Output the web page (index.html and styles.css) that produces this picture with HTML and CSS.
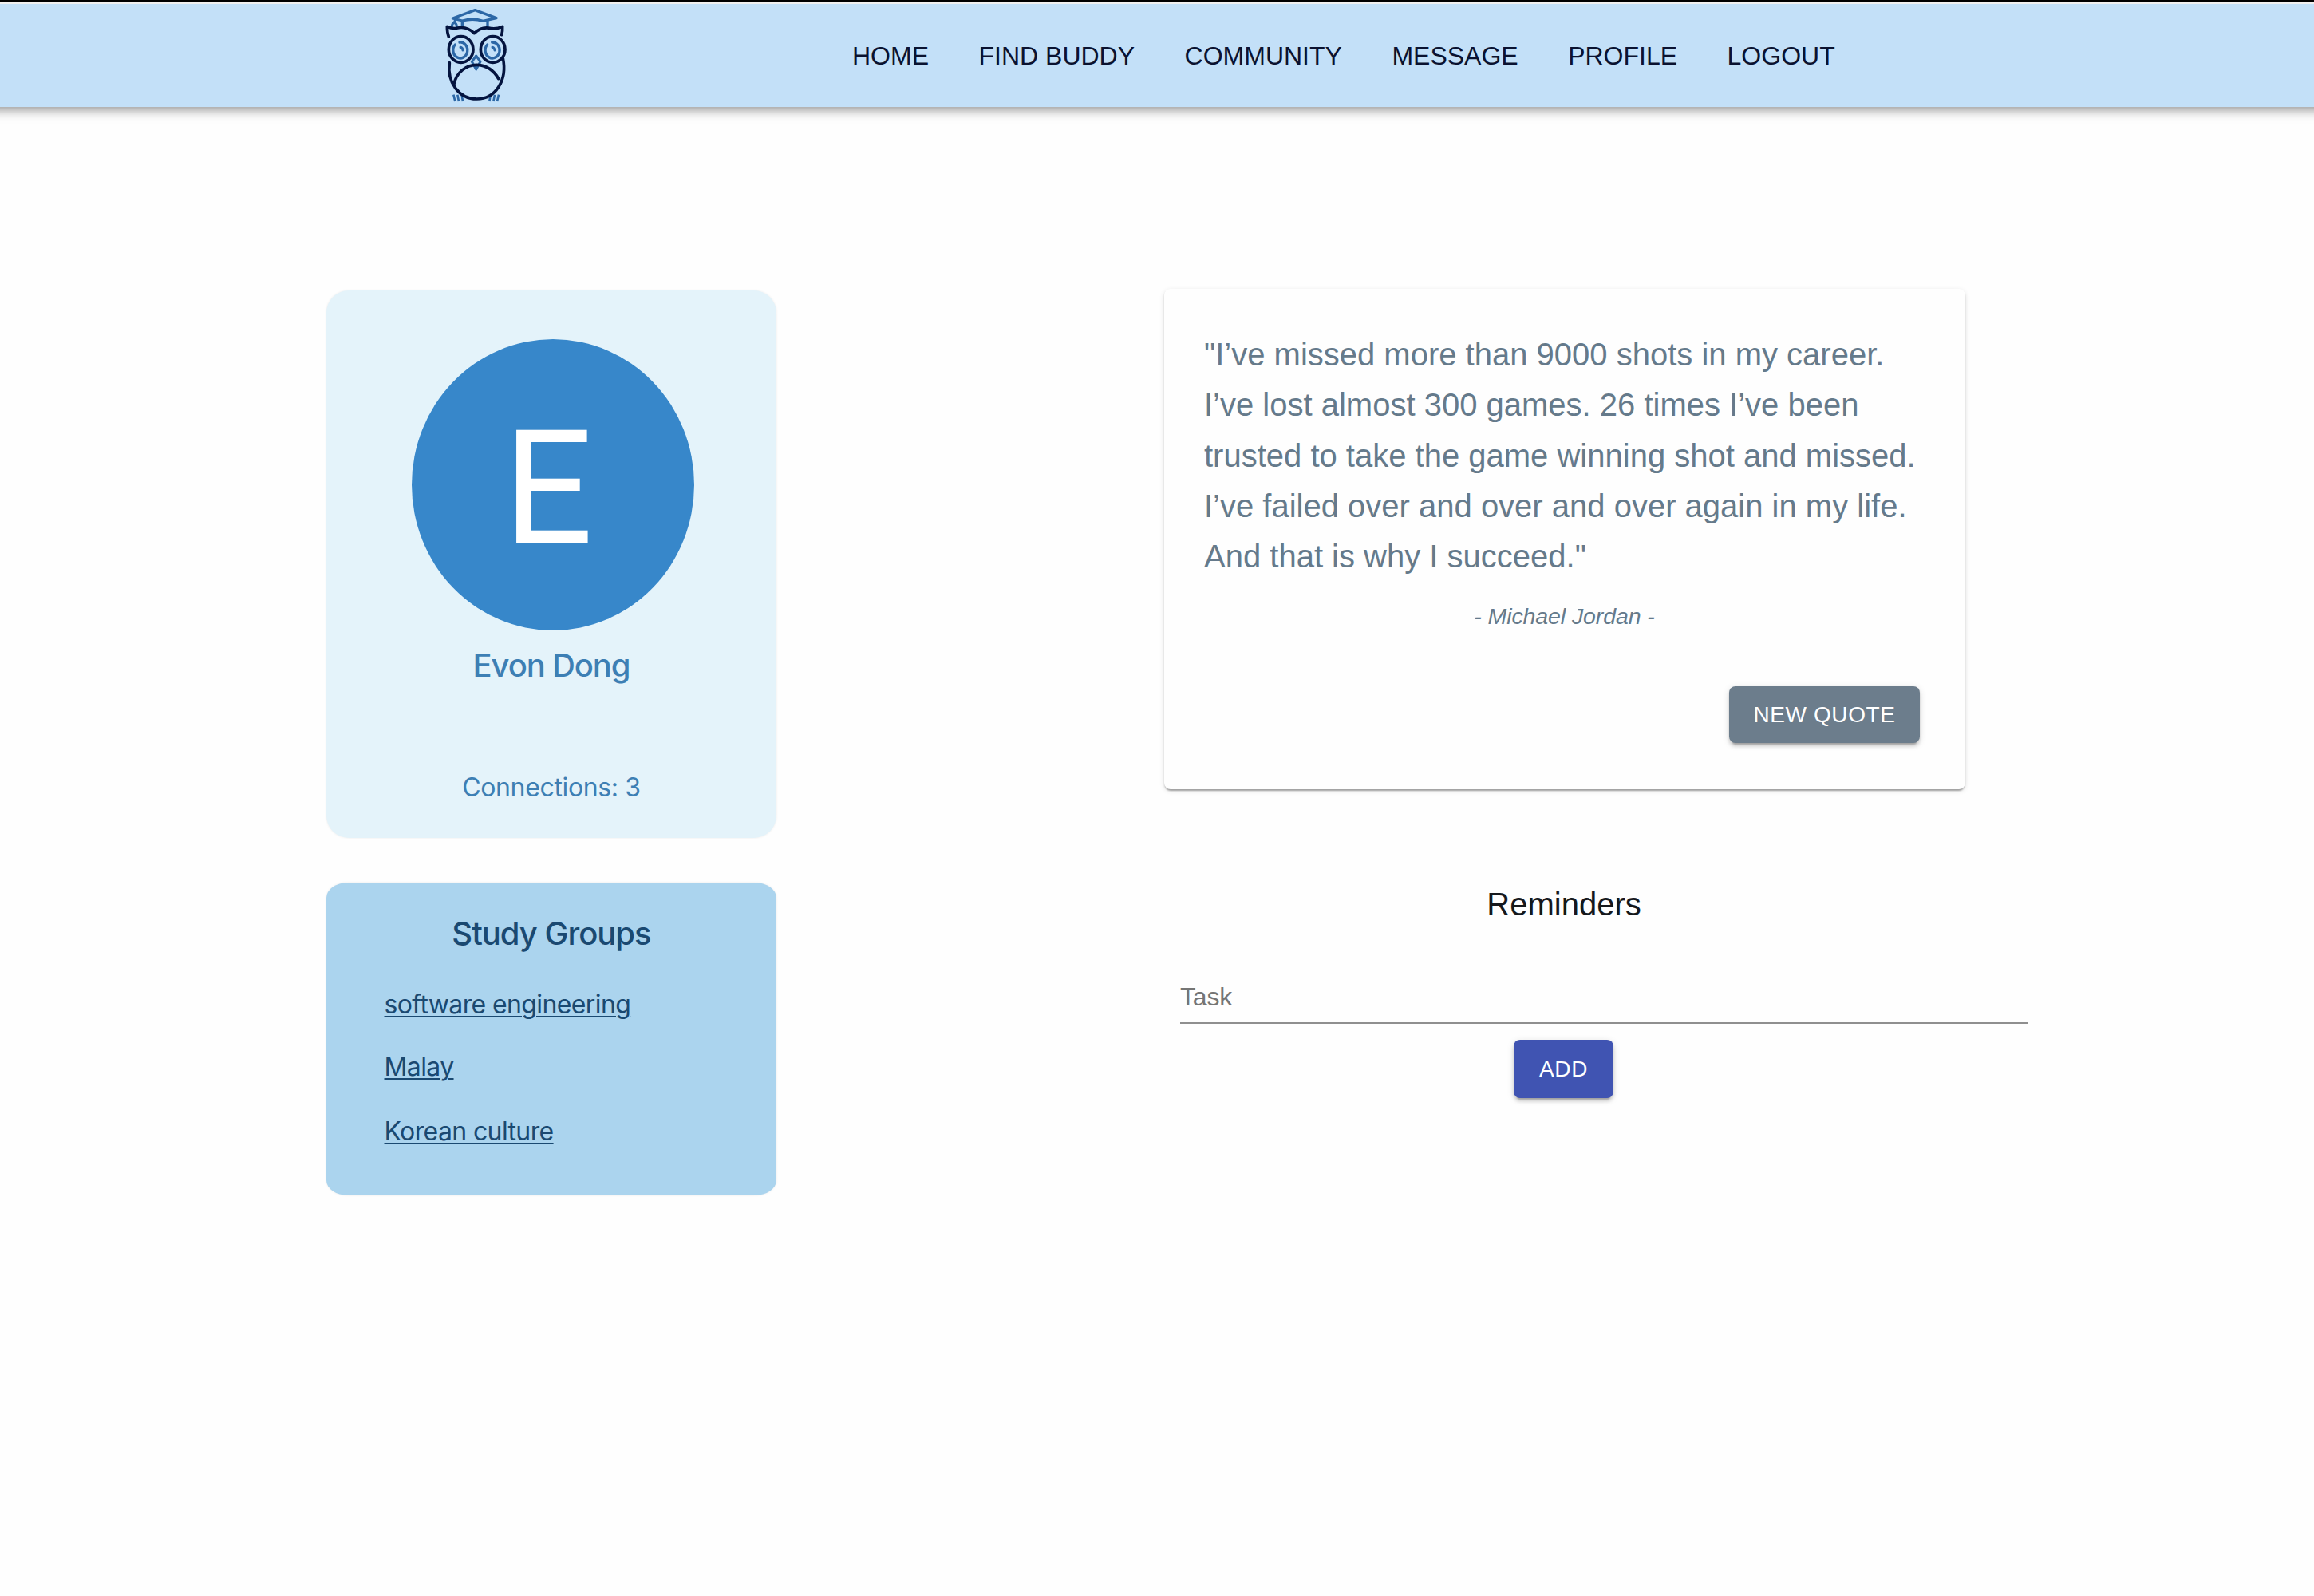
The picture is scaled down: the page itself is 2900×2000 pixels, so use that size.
FILE: index.html
```html
<!DOCTYPE html>
<html lang="en">
<head>
<meta charset="utf-8">
<title>Study Buddy</title>
<link rel="stylesheet" href="styles.css">
</head>
<body>
<header class="topbar">
  <a class="logo" href="#">
    <svg viewBox="0 0 420 387" width="140" height="129" fill="none" stroke-linecap="round" stroke-linejoin="round" aria-label="Owl">
      <g stroke="#2c67a6" stroke-width="10">
        <path d="M112 54 L196 23 L276 53 L226 64 Q188 52 148 63 Z"/>
        <path d="M148 65 V85 M243 63 V86 M124 56 L118 70"/>
        <path d="M109 86 Q109 71 118 71 Q127 71 127 86" stroke-width="9"/>
        <path d="M121 153 A27 30 0 1 0 138 144 M242 153 A27 30 0 1 0 260 144"/>
        <path d="M141 163 Q149 164 150 174 M261 163 Q268 164 270 174" stroke-width="9"/>
        <path d="M200 195 L216 217 L200 246 L184 217 Z" stroke-width="9"/>
        <path d="M115 341 L121 366 M130 341 L135 366 M146 341 L150 366 M254 341 L250 366 M270 341 L265 366 M285 341 L279 366" stroke-width="8" stroke-linecap="butt"/>
      </g>
      <g stroke="#04143f" stroke-width="11">
        <path d="M97 123 Q91 108 91 85 Q108 93 126 91 Q164 81 193 110 Q220 84 253 91 Q275 95 299 85 Q300 102 296 116"/>
        <ellipse cx="143" cy="171" rx="46" ry="49"/>
        <ellipse cx="263" cy="171" rx="46" ry="49"/>
        <path d="M100 221 C90 295 136 357 202 357 C274 357 318 286 301 204"/>
        <path d="M117 301 C126 258 162 229 201 229 C239 229 269 252 284 281"/>
      </g>
    </svg>
  </a>
  <nav class="menu">
    <a>HOME</a><a>FIND BUDDY</a><a>COMMUNITY</a><a>MESSAGE</a><a>PROFILE</a><a>LOGOUT</a>
  </nav>
</header>
<main class="page">
  <section class="side">
    <article class="profile">
      <div class="avatar">E</div>
      <h2 class="name">Evon Dong</h2>
      <p class="connections">Connections: 3</p>
    </article>
    <article class="groups">
      <h2 class="groups-title">Study Groups</h2>
      <ul class="group-list">
        <li><a>software engineering</a></li>
        <li><a>Malay</a></li>
        <li><a>Korean culture</a></li>
      </ul>
    </article>
  </section>
  <section class="content">
    <article class="quote">
      <p class="quote-text">"I’ve missed more than 9000 shots in my career.<br>I’ve lost almost 300 games. 26 times I’ve been<br>trusted to take the game winning shot and missed.<br>I’ve failed over and over and over again in my life.<br>And that is why I succeed."</p>
      <p class="author">- Michael Jordan -</p>
      <button class="btn btn-quote">NEW QUOTE</button>
    </article>
    <section class="reminders">
      <h2 class="reminders-title">Reminders</h2>
      <div class="field">Task</div>
      <button class="btn btn-add">ADD</button>
    </section>
  </section>
</main>
</body>
</html>
```
FILE: styles.css
```css
* { box-sizing: border-box; }

body {
  margin: 0;
  background: #fefefe;
  border-top: 2px solid #000;
  font-family: "Liberation Sans", Arial, sans-serif;
  font-size: 32px;
  line-height: 40px;
  min-height: 2000px;
  overflow-x: hidden;
}

h2, p, ul { margin: 0; padding: 0; font-weight: 400; }

/* Runs past both window edges so its shadow stays even to the sides */
.topbar {
  display: flex;
  align-items: center;
  height: 129px;
  margin: 3px -30px 0;
  padding-left: 560px;
  background: #c3e0f8;
  box-shadow: 0 4px 8px -2px rgba(0,0,0,.2), 0 8px 10px 0 rgba(0,0,0,.14), 0 2px 20px 0 rgba(0,0,0,.12);
}
.logo { display: flex; width: 140px; height: 129px; }
.menu {
  display: flex;
  gap: 62.5px;
  margin-left: 398px;
  color: #0a1230;
}

.page { display: flex; padding: 228px 0 0 409px; }

.side { width: 564px; padding-top: 2px; }
.profile, .groups { box-shadow: 0 0 3px rgba(0,0,0,.08); font-family: Inter, "Liberation Sans", sans-serif; }
.profile {
  height: 686px;
  padding-top: 61px;
  border-radius: 28px;
  background: #e4f3fa;
  color: #3d7fb4;
  text-align: center;
}
.avatar {
  width: 354px;
  height: 365px;
  margin-left: 106.5px;
  padding-right: 11px;
  border-radius: 50%;
  background: #3787ca;
  color: #fff;
  font: 400 198px/375px Roboto, sans-serif;
}
.name { margin-top: 19.5px; font-size: 40px; line-height: 48px; font-weight: 500; letter-spacing: -1.15px; }
.connections { margin-top: 109px; letter-spacing: -.35px; }

.groups {
  height: 392px;
  margin-top: 56px;
  padding-top: 40px;
  border-radius: 27px / 19px;
  background: #abd4ee;
  color: #1a4971;
}
.groups-title { font-size: 40px; line-height: 48px; font-weight: 500; text-align: center; letter-spacing: -1px; }
.group-list {
  display: grid;
  grid-template-rows: 78px 81px 40px;
  margin-top: 45px;
  padding-left: 72.5px;
  list-style: none;
  letter-spacing: -.62px;
}
.group-list a { text-decoration: underline; text-decoration-thickness: 2px; text-underline-offset: 3px; }

.content { margin-left: 486px; }
.quote {
  display: flex;
  flex-direction: column;
  width: 1004px;
  height: 627px;
  padding: 51px 57px 0 50px;
  border-radius: 8px;
  background: #fefefe;
  box-shadow: 0 4px 2px -2px rgba(0,0,0,.2), 0 2px 2px 0 rgba(0,0,0,.14), 0 2px 6px 0 rgba(0,0,0,.12);
  color: #657a8b;
}
.quote-text { font-size: 40px; line-height: 63.3px; white-space: nowrap; }
.author { margin: 23px 0 0 6px; font-size: 28.5px; font-style: italic; text-align: center; letter-spacing: -.1px; }

.btn {
  border: 0;
  border-radius: 8px;
  padding: 0;
  color: #fff;
  font: 28px/40px "Liberation Sans", Arial, sans-serif;
  letter-spacing: .6px;
  box-shadow: 0 6px 2px -4px rgba(0,0,0,.2), 0 4px 4px 0 rgba(0,0,0,.14), 0 2px 10px 0 rgba(0,0,0,.12);
}
.btn-quote { align-self: flex-end; width: 239px; height: 71px; margin-top: 68px; background: #6c7d8c; }

.reminders {
  display: flex;
  flex-direction: column;
  align-items: center;
  width: 1062px;
  margin: 120px 0 0 20px;
}
.reminders-title { align-self: flex-start; width: 962px; font-size: 40px; line-height: 48px; text-align: center; color: #15181c; }
.field {
  width: 1062px;
  height: 54px;
  margin-top: 72px;
  border-bottom: 2px solid #8f8f8f;
  color: #757575;
  letter-spacing: -.2px;
}
.btn-add { width: 125px; height: 73px; margin: 20px 101px 0 0; background: #4054b2; }
```
